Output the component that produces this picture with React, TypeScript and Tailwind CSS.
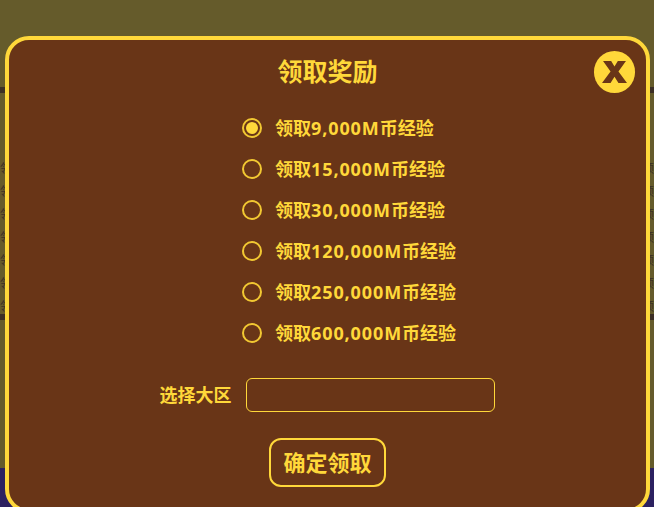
const font = "font-['Noto_Sans','Noto_Sans_CJK_SC',sans-serif]";

const options = ["9,000M", "15,000M", "30,000M", "120,000M", "250,000M", "600,000M"];

function SideText() {
  return (
    <div className="flex flex-col gap-[9px] pt-[6px]">
      {[0, 1, 2, 3, 4, 5, 6].map((i) => (
        <div key={i} className="flex justify-between text-[12px] leading-[14px] text-[#3c2f25]">
          <span>领</span>
          <span>领</span>
        </div>
      ))}
    </div>
  );
}

export default function App() {
  return (
    <div className={`relative h-[507px] w-[654px] overflow-hidden bg-[#655b2b] ${font}`}>
      <div className="flex h-full flex-col">
        <div className="h-[87px] shrink-0" />
        <div className="h-[6px] shrink-0 bg-[#3c2f25]" />
        <div className="h-[63px] shrink-0" />
        <SideText />
        <div className="h-[6px] shrink-0 bg-[#3c2f25]" />
        <div className="grow" />
        <div className="h-[39px] shrink-0 bg-[#2c2160]" />
      </div>

      <div className="absolute left-[5px] top-[36px] h-[477px] w-[645px] rounded-[24px] border-4 border-[#ffd83a] bg-[#693517]">
        <div className="flex flex-col items-center">
          <h2 className="mt-[13px] text-[25px] font-bold leading-[36px] text-[#ffd83a]">领取奖励</h2>

          <div className="mt-[28px] flex w-full flex-col gap-[19px] pl-[233px]">
            {options.map((o, i) => (
              <label key={o} className="flex h-[22px] items-center gap-[13px] text-[18px] font-bold text-[#ffd83a]">
                <span className="flex size-[20px] items-center justify-center rounded-full border-2 border-[#f2c832]">
                  {i === 0 && <span className="size-[12px] rounded-full bg-[#ffd83a]" />}
                </span>
                <span className="whitespace-nowrap">
                  领取<span className="tracking-[0.9px]">{o}</span>币经验
                </span>
              </label>
            ))}
          </div>

          <div className="mt-[34px] flex items-center gap-[14px] pr-[1px]">
            <span className="text-[18px] font-bold leading-[24px] text-[#ffd83a]">选择大区</span>
            <div className="h-[34px] w-[249px] rounded-[6px] border border-[#ffd83a]" />
          </div>

          <button className="mt-[26px] flex h-[49px] w-[117px] items-center justify-center rounded-[12px] border-2 border-[#ffd83a] text-[22px] font-bold text-[#ffd83a]">
            确定领取
          </button>
        </div>

        <button className="absolute right-[11px] top-[11px] flex h-[42px] w-[41px] items-center justify-center rounded-full bg-[#ffd83a]">
          <svg viewBox="0 0 24 21" className="h-[22px] w-[25px]" aria-hidden="true">
            <path d="M1 0H8.8L12 5.2L15.2 0H23L15.8 10L24 21H15.8L12 15L8.2 21H0L8.2 10Z" fill="#693517" />
          </svg>
        </button>
      </div>
    </div>
  );
}
